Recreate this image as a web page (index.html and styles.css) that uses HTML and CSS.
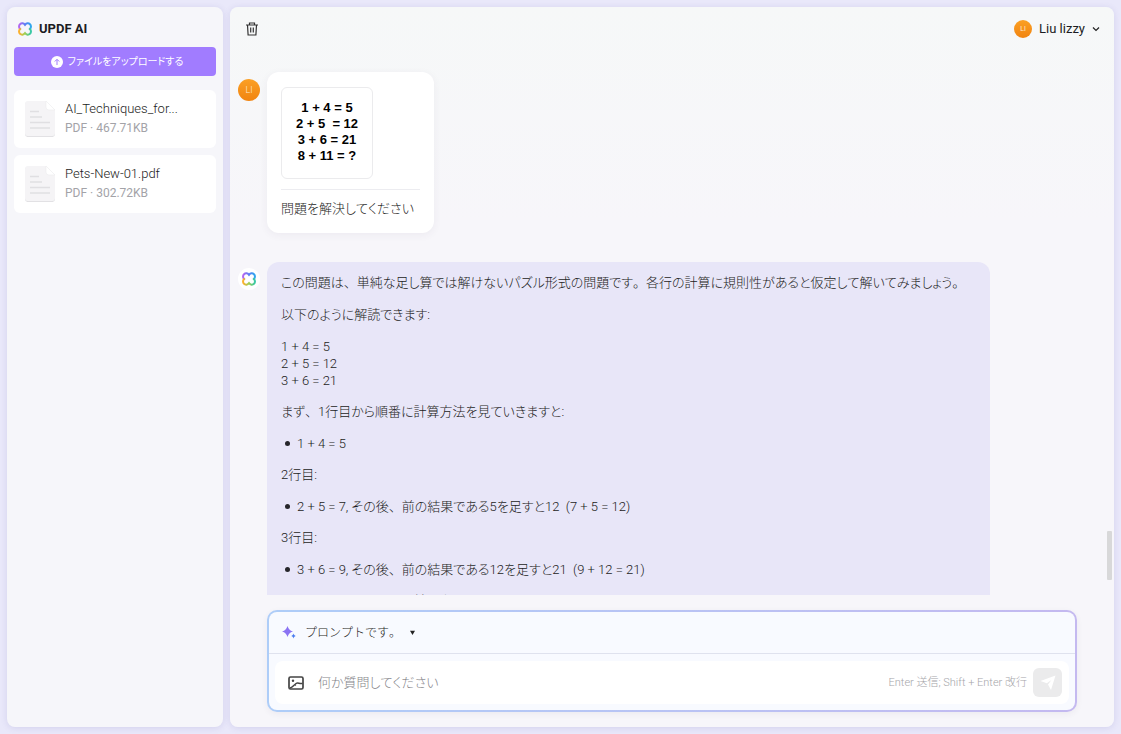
FILE: index.html
```html
<!DOCTYPE html>
<html lang="ja">
<head>
<meta charset="utf-8">
<meta name="viewport" content="width=device-width, initial-scale=1">
<title>UPDF AI</title>
<link rel="stylesheet" href="styles.css">
</head>
<body>
<svg class="defs" aria-hidden="true">
  <defs>
    <linearGradient id="g-top" x1="0" y1="0" x2="1" y2="0"><stop offset="0" stop-color="#b667f0"/><stop offset=".5" stop-color="#5a7cf5"/><stop offset="1" stop-color="#2fa8ee"/></linearGradient>
    <linearGradient id="g-bottom" x1="0" y1="0" x2="1" y2="0"><stop offset="0" stop-color="#ffb02e"/><stop offset=".5" stop-color="#9bcf55"/><stop offset="1" stop-color="#35c8a8"/></linearGradient>
    <symbol id="logo" viewBox="0 0 14 14">
      <path fill="none" stroke="url(#g-top)" stroke-width="2" stroke-linecap="round" d="M2.200 7C.7 5.900.7 3.400 2 2.200C3.400.9 5.600 1 7 2.800C8.400 1 10.600.9 12 2.200C13.300 3.400 13.300 5.900 11.800 7"/>
      <path fill="none" stroke="url(#g-bottom)" stroke-width="2" stroke-linecap="round" d="M2.200 7C.7 8.100.7 10.600 2 11.800C3.400 13.100 5.600 13 7 11.200C8.400 13 10.600 13.100 12 11.800C13.300 10.600 13.300 8.100 11.800 7"/>
    </symbol>
    <symbol id="doc" viewBox="0 0 30 36">
      <path fill="#e6e5e7" d="M3 1h18l9 9v23a3 3 0 0 1-3 3H3a3 3 0 0 1-3-3V4a3 3 0 0 1 3-3z"/>
      <path fill="#f5f4f6" d="M3 0h18l9 9v23a3 3 0 0 1-3 3H3a3 3 0 0 1-3-3V3a3 3 0 0 1 3-3z"/>
      <path fill="#fff" stroke="#ececee" stroke-width=".6" d="M21 0l9 9h-6a3 3 0 0 1-3-3z"/>
      <path stroke="#e0dfe2" stroke-width="1.500" d="M5 10.500h9M5 16h12M5 21.500h20M5 27h20"/>
      <path stroke="#e2e1e4" d="M2 35.500h26"/>
    </symbol>
  </defs>
</svg>
<div class="app">
  <aside class="sidebar">
    <h1 class="brand"><svg class="logo"><use href="#logo"/></svg>UPDF AI</h1>
    <button class="upload" type="button">
      <svg class="upload-icon" viewBox="0 0 12 12"><circle cx="6" cy="6" r="6" fill="#fff"/><path d="M6 9V3.500M3.800 5.500L6 3.300l2.200 2.200" fill="none" stroke="#a17cff"/></svg>
      ファイルをアップロードする
    </button>
    <ul class="files">
      <li class="file"><svg class="doc"><use href="#doc"/></svg><div><div class="file-name">AI_Techniques_for...</div><div class="file-meta">PDF · 467.71KB</div></div></li>
      <li class="file"><svg class="doc"><use href="#doc"/></svg><div><div class="file-name">Pets-New-01.pdf</div><div class="file-meta">PDF · 302.72KB</div></div></li>
    </ul>
  </aside>

  <main class="chat">
    <header class="topbar">
      <button class="icon-btn" type="button" aria-label="Delete">
        <svg viewBox="0 0 14 14" class="trash"><path fill="none" stroke="#333" stroke-width="1.200" d="M1 3h12M4.500 3V1h5v2M2.500 3l.6 10h7.800l.6-10M5.700 5.500v5M8.300 5.500v5"/></svg>
      </button>
      <button class="account" type="button">
        <span class="avatar avatar-small">LI</span>Liu lizzy
        <svg viewBox="0 0 8 8" class="chevron"><path fill="none" stroke="#222" stroke-width="1.200" d="M1 2.500l3 3 3-3"/></svg>
      </button>
    </header>

    <section class="messages">
      <article class="message">
        <span class="avatar">LI</span>
        <div class="bubble bubble-user">
          <div class="sheet">1 + 4 = 5<br>2 + 5 &nbsp;= 12<br>3 + 6 = 21<br>8 + 11 = ?</div>
          <p class="ask">問題を解決してください</p>
        </div>
      </article>
      <article class="message">
        <span class="bot"><svg class="logo"><use href="#logo"/></svg></span>
        <div class="bubble bubble-bot">
          <p>この問題は<span class="mark">、</span>単純な足し算では解けないパズル形式の問題です<span class="mark">。</span>各行の計算に規則性があると仮定して解いてみましょう<span class="mark">。</span></p>
          <p>以下のように解読できます:</p>
          <p class="sums">1 + 4 = 5<br>2 + 5 = 12<br>3 + 6 = 21</p>
          <p>まず<span class="mark">、</span>1行目から順番に計算方法を見ていきますと:</p>
          <ul><li>1 + 4 = 5</li></ul>
          <p>2行目:</p>
          <ul><li><span>2 + 5 = 7, その後<span class="mark">、</span>前の結果である5を足すと12 &nbsp;(7 + 5 = 12)</span></li></ul>
          <p>3行目:</p>
          <ul><li><span>3 + 6 = 9, その後<span class="mark">、</span>前の結果である12を足すと21 &nbsp;(9 + 12 = 21)</span></li></ul>
          <ul><li>8 + 11 = 19, 19 + 21, 結果を足すと40</li></ul>
        </div>
      </article>
      <div class="thumb"></div>
    </section>

    <form class="composer">
      <button class="prompt" type="button">
        <svg viewBox="0 0 14 14" class="spark"><path fill="#8b73f3" d="M5.500 0C6.500 3.200 7.800 4.500 11 5.500 7.800 6.500 6.500 7.800 5.500 11 4.500 7.800 3.200 6.500 0 5.500 3.200 4.500 4.500 3.200 5.500 0z"/><path fill="#4a7df0" d="M11.500 7.500c.4 1.400 1.100 2.100 2.500 2.500-1.400.4-2.100 1.100-2.500 2.500-.4-1.400-1.100-2.100-2.500-2.500 1.400-.4 2.100-1.100 2.500-2.500z"/></svg>
        <span class="prompt-label">プロンプトです。</span>
        <svg viewBox="0 0 6 6" class="caret"><path fill="#222" d="M0 1h6L3 6z"/></svg>
      </button>
      <div class="entry">
        <button class="icon-btn" type="button" aria-label="Image">
          <svg viewBox="0 0 16 14" class="picture"><rect x="1" y="1" width="14" height="12" rx="1.500" fill="none" stroke="#444" stroke-width="1.700"/><circle cx="5" cy="4.800" r="1.200" fill="#444"/><path fill="none" stroke="#444" stroke-width="1.500" d="M2 12c3-.3 3.500-2.800 6-4.500C10 6.200 11 8 14.500 7.500M7 8.500l1 .8"/></svg>
        </button>
        <input class="field" type="text" aria-label="質問" placeholder="何か質問してください">
        <span class="hint">Enter 送信; Shift + Enter 改行</span>
        <button class="send" type="submit" aria-label="送信"><svg viewBox="0 0 16 16"><path fill="#fff" d="M15.500.5L11 15 8 9.500 11.500 5 6.800 8.200.5 6z"/></svg></button>
      </div>
    </form>
  </main>
</div>
</body>
</html>
```
FILE: styles.css
```css
* { box-sizing: border-box; }

body {
  margin: 0;
  background: #e9e8fa;
  color: #1c1c22;
  font: 300 13px/18px Roboto, "Noto Sans CJK JP", sans-serif;
  font-feature-settings: "palt";
  font-kerning: none;
}

button, input { font: inherit; font-feature-settings: inherit; font-kerning: inherit; color: inherit; }
button { border: 0; padding: 0; background: none; cursor: pointer; }
ul { list-style: none; margin: 0; padding: 0; }
p { margin: 0; }
svg { display: block; flex: none; }
.defs { position: absolute; width: 0; height: 0; }

.app { display: flex; gap: 7px; height: 100vh; padding: 7px; }

.sidebar {
  flex: 0 0 216px;
  padding: 13px 7px;
  border-radius: 8px;
  background: #f6f6fa;
  box-shadow: 0 1px 6px rgba(90, 80, 160, .15);
}

.brand { display: flex; align-items: center; gap: 7px; margin: 0 0 9px 4px; font-size: 13px; line-height: 18px; font-weight: 700; }
.logo { width: 14px; height: 14px; }

.upload {
  display: flex; align-items: center; justify-content: center; gap: 5px;
  width: 100%; height: 29px; padding-left: 4px;
  border-radius: 4px; background: #a17cff; color: #fff; font-size: 10px; font-weight: 400;
}
.upload-icon { width: 12px; height: 12px; }

.files { display: grid; gap: 7px; margin-top: 14px; }
.file { display: flex; align-items: center; gap: 10px; height: 58px; padding: 0 11px 1px; border-radius: 6px; background: #fff; font-kerning: normal; }
.doc { width: 30px; height: 36px; }
.file-name { line-height: 20px; }
.file-meta { line-height: 19px; font-size: 12px; font-weight: 400; color: #a3a3a8; }

.chat {
  position: relative;
  flex: 1; min-width: 0;
  display: flex; flex-direction: column;
  padding-bottom: 15px;
  border-radius: 8px;
  background: linear-gradient(#f6f8f8, #f7f6fa 30%);
  box-shadow: 0 1px 6px rgba(90, 80, 160, .15);
}

.topbar { display: flex; align-items: center; justify-content: space-between; height: 44px; padding: 0 14px 0 15px; }
.trash { width: 14px; height: 14px; }
.account { display: flex; align-items: center; gap: 7px; font-weight: 400; }
.chevron { width: 8px; height: 8px; }

.avatar {
  display: grid; place-items: center; flex: none;
  width: 22px; height: 22px; margin-top: 7px;
  border-radius: 50%;
  background: linear-gradient(#fba024, #f18410);
  color: #fdebd0; font-size: 9px; line-height: 10px;
}
.avatar-small { width: 18px; height: 18px; margin: 0; font-size: 7px; }

.messages { flex: 1; min-height: 0; overflow: hidden; padding: 21px 124px 0 8px; display: flex; flex-direction: column; gap: 29px; }
.message { display: flex; flex: none; align-items: flex-start; gap: 7px; }
.bot { display: grid; place-items: center; flex: none; width: 22px; height: 22px; margin-top: 6px; border-radius: 50%; background: #fff; }
.bubble { border-radius: 12px; padding: 15px 14px; }
.bubble-user { min-width: 167px; background: #fff; box-shadow: 0 2px 8px rgba(60, 50, 90, .06); }
.bubble-bot { flex: 1; display: grid; gap: 14px; padding: 12px 14px; background: #e8e6f8; }

.sheet {
  display: grid; place-content: center;
  width: 92px; height: 92px; padding-bottom: 2px;
  border: 1px solid #ebebed; border-radius: 6px;
  color: #000; text-align: center;
  font: 900 13px/16px "Liberation Sans", Arial, sans-serif;
}
.ask { margin-top: 10px; padding-top: 10px; border-top: 1px solid #ececf0; }
.mark { font-feature-settings: normal; }
.sums, .bubble-bot ul { line-height: 17px; }
.bubble-bot li { display: flex; align-items: center; gap: 7px; padding-left: 4px; }
.bubble-bot li::before { content: ""; width: 5px; height: 5px; border-radius: 50%; background: #26262b; }

.thumb { position: absolute; right: 2px; bottom: 147px; width: 5px; height: 49px; border-radius: 1px; background: #d8d8d9; }

.composer {
  margin: 15px 37px 0;
  border: 2px solid transparent; border-radius: 10px;
  background: linear-gradient(#f8faff, #f8faff) padding-box, linear-gradient(90deg, #aecdf8, #c4b9f0) border-box;
  box-shadow: 0 2px 6px rgba(60, 50, 90, .06);
}
.prompt { display: flex; align-items: center; gap: 9px; width: 100%; height: 42px; padding: 0 13px; border-bottom: 1px solid #dfe2ee; }
.prompt-label { font-size: 12px; font-feature-settings: normal; }
.spark { width: 14px; height: 14px; }
.caret { width: 5px; height: 5px; }
.entry { display: flex; align-items: center; margin: 7px 6px 6px; padding: 0 7px 0 13px; height: 43px; border-radius: 8px; background: #fff; }
.picture { width: 16px; height: 14px; }
.field { flex: 1; min-width: 0; margin-left: 14px; padding: 0; border: 0; outline: 0; background: none; }
.field::placeholder { color: #85858a; opacity: 1; }
.hint { color: #a6a6aa; font-size: 11px; }
.send { display: grid; place-items: center; width: 29px; height: 29px; margin-left: 6px; border-radius: 6px; background: #ebebec; }
.send svg { width: 16px; height: 16px; }
```
